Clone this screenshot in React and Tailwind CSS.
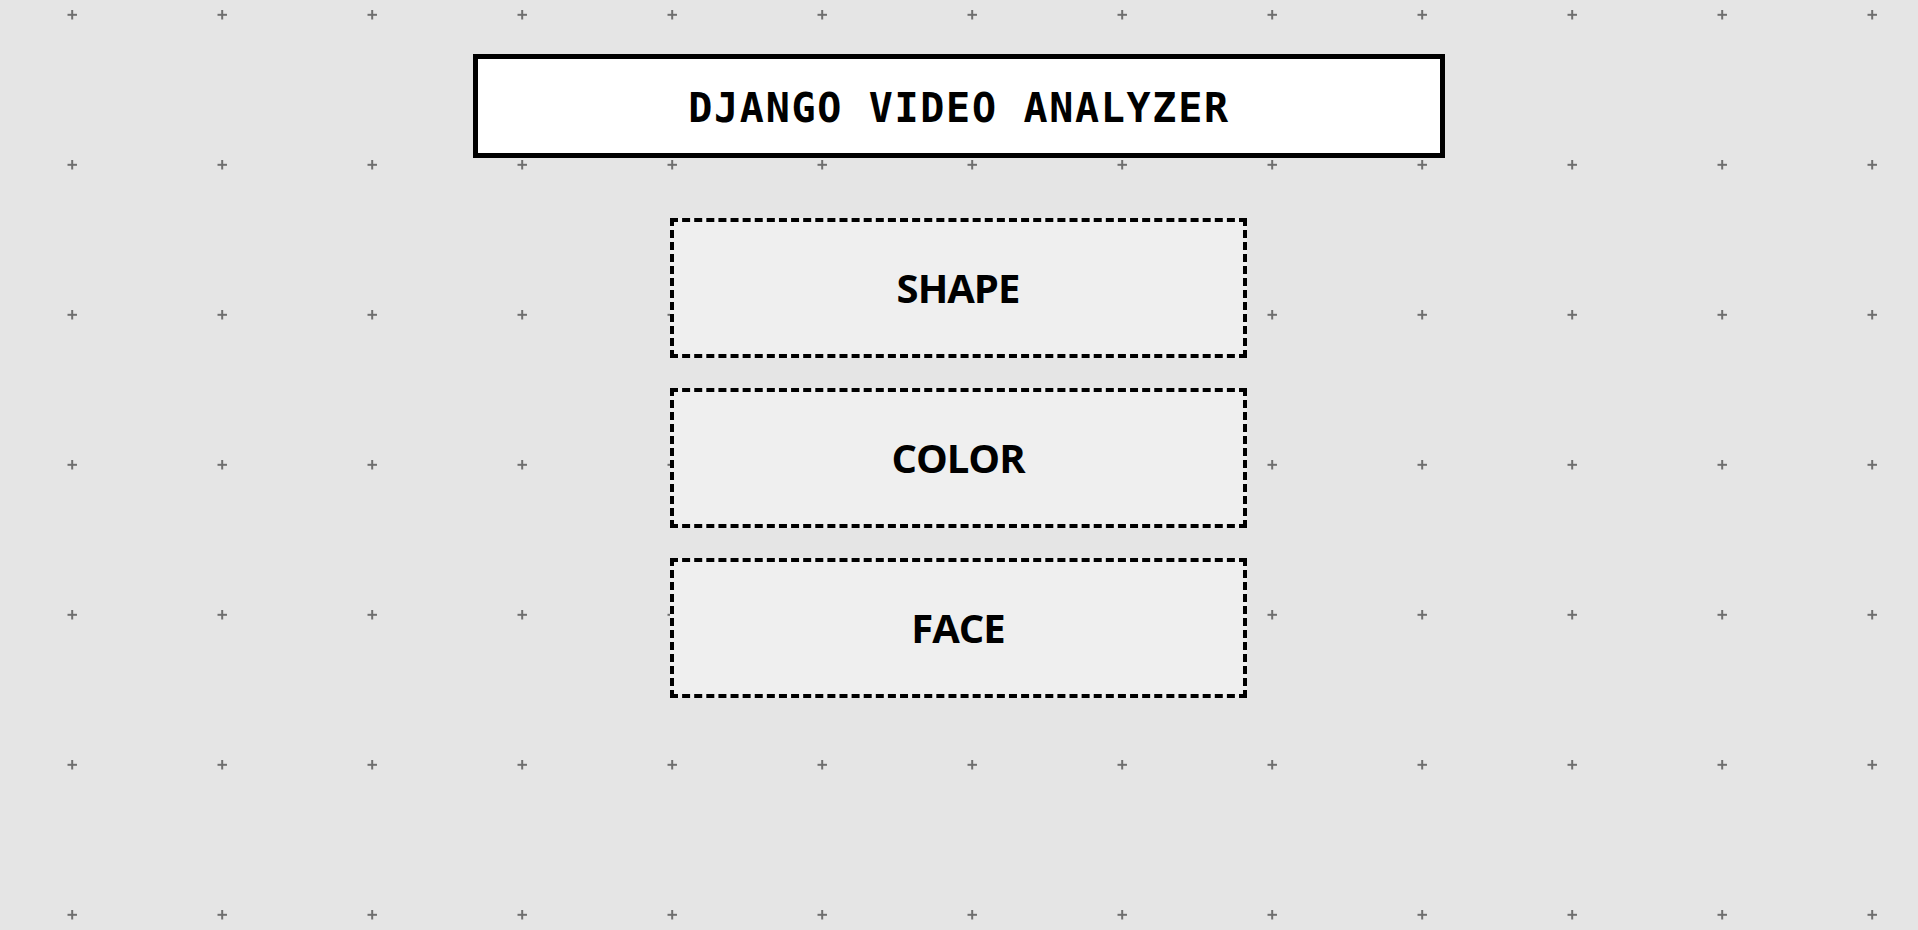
import React from 'react';

const analyzers = ['SHAPE', 'COLOR', 'FACE'];

// background grid of small plus marks, 150px apart
const PlusGrid = () => (
    <svg className="absolute inset-0 w-full h-full" aria-hidden="true">
        <defs>
            <pattern id="plus-grid" width="150" height="150" patternUnits="userSpaceOnUse">
                <rect x="67.5" y="13.8" width="9.5" height="2" fill="#6f6f6f" />
                <rect x="71.2" y="10" width="2" height="9.5" fill="#6f6f6f" />
            </pattern>
        </defs>
        <rect width="100%" height="100%" fill="url(#plus-grid)" />
    </svg>
);

const App = () => {
    return (
        <div className="relative min-h-screen bg-[#e5e5e5] overflow-hidden">
            <PlusGrid />
            <div className="relative flex flex-col items-center pt-[54px]">
                {/* Title */}
                <div className="w-[972px] h-[104px] bg-white border-[5px] border-black flex items-center justify-center pt-[4px]">
                    <h1 className="font-['DejaVu_Sans_Mono',monospace] font-bold text-[40px] tracking-[1.7px] text-black">
                        DJANGO VIDEO ANALYZER
                    </h1>
                </div>

                {/* Analyzer buttons */}
                <div className="mt-[60px] flex flex-col gap-[30px] -translate-x-[1px]">
                    {analyzers.map((name) => (
                        <button
                            key={name}
                            className="w-[577px] h-[140px] bg-[#efefef] border-4 border-dashed border-black flex items-center justify-center font-['Open_Sans',sans-serif] font-bold text-[40px] tracking-[-1px] text-black"
                        >
                            {name}
                        </button>
                    ))}
                </div>
            </div>
        </div>
    );
};

export default App;
